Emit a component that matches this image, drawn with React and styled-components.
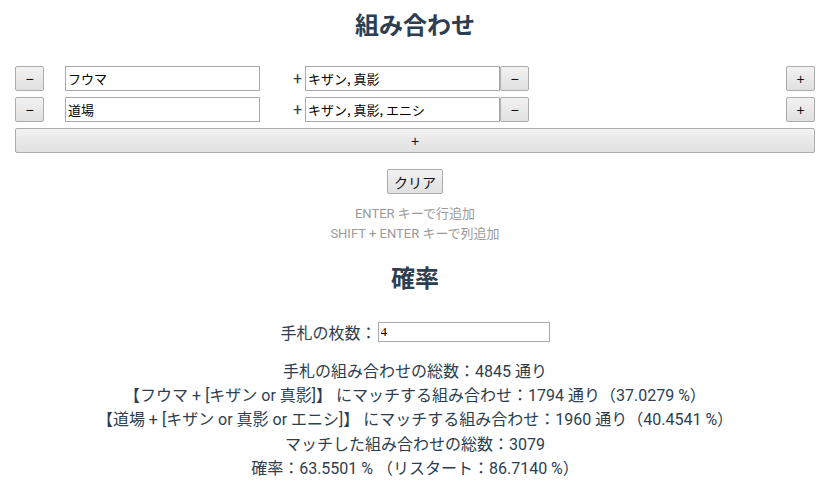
import React, { useState } from "react";
import styled, { createGlobalStyle } from "styled-components";

const GlobalStyle = createGlobalStyle`
  html, body {
    margin: 0;
    padding: 0;
    background: #fff;
  }
  body {
    font-family: Roboto, "Noto Sans CJK JP", sans-serif;
    color: #2c3e50;
  }
`;

const initialRows = [
  { main: "フウマ", subs: "キザン, 真影" },
  { main: "道場", subs: "キザン, 真影, エニシ" },
];

const App = () => {
  const [rows, setRows] = useState(initialRows);
  const [hand, setHand] = useState("4");

  const update = (i, key, value) => {
    setRows(rows.map((r, j) => (j === i ? { ...r, [key]: value } : r)));
  };

  return (
    <Page>
      <GlobalStyle />
      <Title>組み合わせ</Title>

      <Board>
        {rows.map((row, i) => (
          <Row key={i}>
            <SmallButton>−</SmallButton>
            <TextInput
              value={row.main}
              onChange={(e) => update(i, "main", e.target.value)}
            />
            <PlusMark>+</PlusMark>
            <TextInput
              $flush
              value={row.subs}
              onChange={(e) => update(i, "subs", e.target.value)}
            />
            <SmallButton>−</SmallButton>
            <Spacer />
            <SmallButton>+</SmallButton>
          </Row>
        ))}
        <WideButton>+</WideButton>
      </Board>

      <ClearButton>クリア</ClearButton>

      <Hint>
        <div>ENTER キーで行追加</div>
        <div>SHIFT + ENTER キーで列追加</div>
      </Hint>

      <Title $second>確率</Title>

      <HandRow>
        <span>手札の枚数：</span>
        <HandInput value={hand} onChange={(e) => setHand(e.target.value)} />
      </HandRow>

      <Results>
        <div>手札の組み合わせの総数：4845 通り</div>
        <div>【フウマ + [キザン or 真影]】 にマッチする組み合わせ：1794 通り（37.0279 %）</div>
        <div>【道場 + [キザン or 真影 or エニシ]】 にマッチする組み合わせ：1960 通り（40.4541 %）</div>
        <div>マッチした組み合わせの総数：3079</div>
        <div>確率：63.5501 % （リスタート：86.7140 %）</div>
      </Results>
    </Page>
  );
};

export default App;

const Page = styled.div`
  display: flex;
  flex-direction: column;
  align-items: center;
  padding: 10px 14px 0 15px;
  text-align: center;
`;

const Title = styled.h2`
  margin: ${(p) => (p.$second ? "19px 0 0" : "0")};
  font-size: 24px;
  line-height: 32px;
  font-weight: 700;
  color: #2c3e50;
`;

const Board = styled.div`
  align-self: stretch;
  display: flex;
  flex-direction: column;
  gap: 6px;
  margin-top: 24px;
`;

const Row = styled.div`
  display: flex;
  align-items: center;
  height: 25px;
`;

const buttonLook = `
  box-sizing: border-box;
  height: 25px;
  border: 1px solid #acacac;
  border-radius: 2px;
  background: linear-gradient(#f2f2f2, #e0e0e0);
  color: #111;
  font-family: "Liberation Sans", "Noto Sans CJK JP", sans-serif;
  font-size: 14px;
  padding: 0;
  cursor: pointer;
`;

const SmallButton = styled.button`
  ${buttonLook}
  width: 29px;
  flex: none;
`;

const WideButton = styled.button`
  ${buttonLook}
  width: 100%;
`;

const ClearButton = styled.button`
  ${buttonLook}
  width: 56px;
  margin-top: 16px;
  font-size: 14px;
`;

const TextInput = styled.input`
  box-sizing: border-box;
  width: 195px;
  height: 25px;
  margin-left: ${(p) => (p.$flush ? "2px" : "21px")};
  padding: 1px 2px;
  border: 1px solid #a9a9a9;
  font-family: "Noto Sans CJK JP", sans-serif;
  font-size: 13px;
  color: #000;
  outline: none;
`;

const PlusMark = styled.span`
  margin-left: 32px;
  font-size: 16px;
  width: 11px;
  line-height: 25px;
`;

const Spacer = styled.div`
  flex: 1;
`;

const Hint = styled.div`
  margin-top: 10px;
  font-size: 13px;
  line-height: 20px;
  color: #9a9a9a;
`;

const HandRow = styled.div`
  display: flex;
  align-items: center;
  margin-top: 25px;
  height: 24px;
  font-size: 16px;
`;

const HandInput = styled.input`
  box-sizing: border-box;
  width: 172px;
  height: 20px;
  margin-left: 1px;
  padding: 1px 2px;
  border: 1px solid #a9a9a9;
  font-family: "Liberation Serif", serif;
  font-size: 13px;
  color: #000;
  outline: none;
`;

const Results = styled.div`
  margin-top: 16px;
  font-size: 16px;
  line-height: 24.2px;
`;
